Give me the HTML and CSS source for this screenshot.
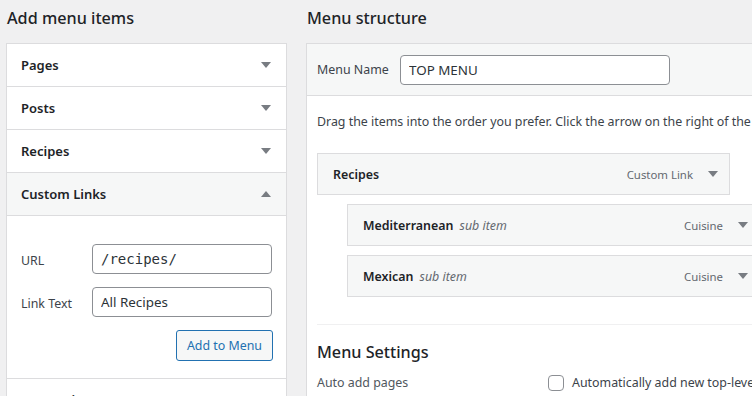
FILE: index.html
```html
<!DOCTYPE html>
<html>
  <head>
    <title>Menus</title>
    <link rel="stylesheet" href="styles.css">
  </head>
  <body>
    <div class="menus">

    <div class="side">
      <h2 class="heading">Add menu items</h2>
      <div class="accordion">
        <div class="acc-row">
          <span>Pages</span>
          <span class="arrow"></span>
        </div>
        <div class="acc-row">
          <span>Posts</span>
          <span class="arrow"></span>
        </div>
        <div class="acc-row">
          <span>Recipes</span>
          <span class="arrow"></span>
        </div>
        <div class="acc-row open">
          <span>Custom Links</span>
          <span class="arrow up"></span>
        </div>
        <div class="acc-body">
          <div class="field">
            <label>URL</label>
            <input class="text-input mono" value="/recipes/">
          </div>
          <div class="field">
            <label>Link Text</label>
            <input class="text-input" value="All Recipes">
          </div>
          <div class="actions">
            <button class="secondary">Add to Menu</button>
          </div>
        </div>
        <div class="acc-row">
          <span>Categories</span>
          <span class="arrow"></span>
        </div>
      </div>
    </div>

    <div class="main">
      <h2 class="heading">Menu structure</h2>
      <div class="frame">
        <div class="frame-head">
          <label>Menu Name</label>
          <input class="text-input name-input" value="TOP MENU">
        </div>
        <div class="frame-body">
          <p class="hint">Drag the items into the order you prefer. Click the arrow on the right of the item to reveal additional configuration options.</p>

          <div class="item">
            <span class="item-title">Recipes</span>
            <span class="item-type">Custom Link</span>
            <span class="arrow"></span>
          </div>
          <div class="item sub">
            <span class="item-title">Mediterranean <em>sub item</em></span>
            <span class="item-type">Cuisine</span>
            <span class="arrow"></span>
          </div>
          <div class="item sub">
            <span class="item-title">Mexican <em>sub item</em></span>
            <span class="item-type">Cuisine</span>
            <span class="arrow"></span>
          </div>

          <div class="settings">
            <h3 class="settings-title">Menu Settings</h3>
            <div class="setting-row">
              <span class="setting-label">Auto add pages</span>
              <label class="check"><span class="box"></span>Automatically add new top-level pages to this menu</label>
            </div>
          </div>
        </div>
      </div>
    </div>

    </div>
  </body>
</html>
```

FILE: styles.css
```css
body{
  margin: 0;
  background-color: #f0f0f1;
  color: #1d2327;
  font-family: "Noto Sans", "Open Sans", sans-serif;
  font-size: 12.4px;
  overflow: hidden;
}

.menus{
  display: flex;
  gap: 19px;
  padding-left: 6px;
  width: 1000px;
}

.side{
  width: 281px;
  flex-shrink: 0;
}

.main{
  width: 480px;
}

.heading{
  margin: 0;
  height: 43px;
  padding-left: 1px;
  font-size: 16.2px;
  font-weight: 500;
  line-height: 36px;
}

.accordion{
  background-color: white;
  border: 1px solid #dcdcde;
}

.acc-row{
  display: flex;
  justify-content: space-between;
  align-items: center;
  height: 42px;
  padding: 0 14px 0 14px;
  border-bottom: 1px solid #dcdcde;
  font-size: 13px;
  font-weight: 600;
}

.acc-row.open{
  background-color: #f6f7f7;
}

.arrow{
  width: 0;
  height: 0;
  border-left: 5px solid transparent;
  border-right: 5px solid transparent;
  border-top: 6px solid #787c82;
  margin-right: 1px;
}

.arrow.up{
  border-top: none;
  border-bottom: 6px solid #787c82;
}

.acc-body{
  padding: 28px 13px 17px 14px;
  border-bottom: 1px solid #dcdcde;
}

.field{
  display: flex;
  align-items: center;
  margin-bottom: 13px;
}

.field label{
  width: 71px;
  padding-top: 3px;
  color: #3c434a;
}

.text-input{
  box-sizing: border-box;
  width: 180px;
  height: 30px;
  padding: 0 8px;
  border: 1px solid #8c8f94;
  border-radius: 4px;
  font-family: "Noto Sans", sans-serif;
  font-size: 13.4px;
  color: #2c3338;
}

.mono{
  font-family: "DejaVu Sans Mono", monospace;
  font-size: 14px;
}

.actions{
  display: flex;
  justify-content: flex-end;
}

.secondary{
  height: 31px;
  padding: 0 10px;
  background-color: #f6f7f7;
  border: 1px solid #2271b1;
  border-radius: 3px;
  color: #2271b1;
  font-family: "Noto Sans", sans-serif;
  font-size: 12.4px;
}

.frame{
  background-color: white;
  border: 1px solid #dcdcde;
  border-right: none;
}

.frame-head{
  display: flex;
  align-items: center;
  height: 51px;
  padding-left: 10px;
  background-color: #f6f7f7;
  border-bottom: 1px solid #dcdcde;
}

.frame-head label{
  width: 83px;
  color: #3c434a;
}

.name-input{
  width: 270px;
}

.frame-body{
  padding: 17px 0 30px 10px;
}

.hint{
  margin: 0 0 23px;
  white-space: nowrap;
  color: #3c434a;
}

.item{
  display: flex;
  align-items: center;
  box-sizing: border-box;
  width: 413px;
  height: 42px;
  margin-bottom: 9px;
  padding: 0 10px 0 15px;
  background-color: #f6f7f7;
  border: 1px solid #dcdcde;
}

.item.sub{
  margin-left: 30px;
}

.item-title{
  flex: 1;
  font-weight: 600;
}

.item-title em{
  font-weight: 400;
  color: #646970;
  margin-left: 3px;
}

.item-type{
  color: #646970;
  font-size: 11.4px;
  margin-right: 15px;
}

.settings{
  margin-top: 27px;
  border-top: 1px solid #f0f0f1;
}

.settings-title{
  margin: 0;
  padding-top: 15px;
  font-size: 16.2px;
  font-weight: 500;
  line-height: 24px;
}

.setting-row{
  display: flex;
  align-items: center;
  margin-top: 10px;
}

.setting-label{
  width: 231px;
  flex-shrink: 0;
  color: #50575e;
}

.check{
  display: flex;
  align-items: center;
  white-space: nowrap;
  color: #3c434a;
}

.box{
  width: 14px;
  height: 14px;
  border: 1px solid #8c8f94;
  border-radius: 4px;
  margin-right: 8px;
  background-color: white;
  flex-shrink: 0;
}
```
